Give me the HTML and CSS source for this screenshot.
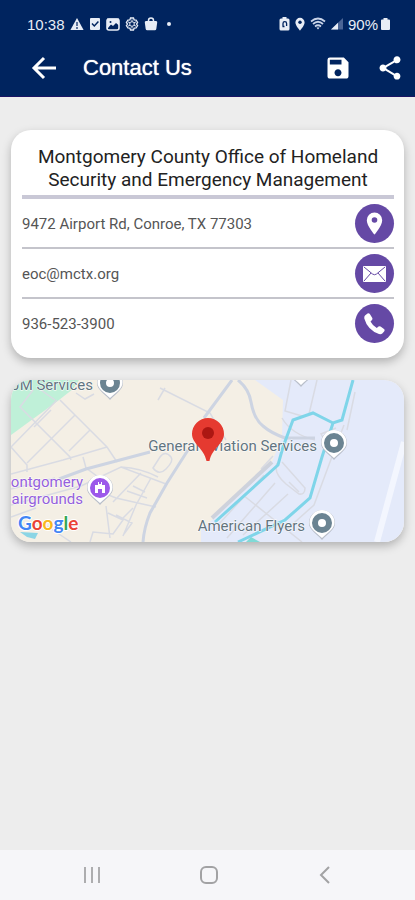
FILE: index.html
```
<!DOCTYPE html>
<html lang="en">
<head>
    <meta charset="UTF-8">
    <meta name="viewport" content="width=device-width, initial-scale=1.0">
    <title>Contact Us</title>
    <link rel="stylesheet" href="styles.css">
</head>
<body>
    <header class="header">
        <div class="status-bar">
            <div class="status-group">
                <span class="status-text">10:38</span>
                <svg width="14" height="14" viewBox="0 0 14 14"><path d="M7 1 13.6 13H.4z" fill="#e8edf6"/><path d="M7 5v4M7 10v2" stroke="#00245f" stroke-width="1.2"/></svg>
                <svg width="12" height="14" viewBox="0 0 12 14"><rect x="1" y="1" width="10" height="12" rx="1" fill="#e8edf6"/><path d="M3 6.5 5.3 9 9.4 4.5" fill="none" stroke="#00245f" stroke-width="1.5"/></svg>
                <svg width="14" height="14" viewBox="0 0 14 14"><rect x="1" y="2" width="12" height="11" rx="2" fill="none" stroke="#e8edf6" stroke-width="1.6"/><path d="M1 1.5h12v7L10 6 7 9 5 7.500 2 11V13L1 12z" fill="#e8edf6"/><path d="M3 10.500 5 8.500 7 10 10 7.500 12 10V11H3z" fill="#00245f"/><circle cx="4.500" cy="5" r="1" fill="#00245f"/></svg>
                <svg width="14" height="14" viewBox="0 0 14 14" fill="none" stroke="#e8edf6"><path d="M5.500 1h3l.6 1.800 2 .2 1.500 2.500L11.500 7l1.100 1.500L11.100 11l-2 .2L8.500 13h-3l-.6-1.800-2-.2L1.400 8.500 2.500 7 1.400 5.500 2.900 3l2-.2z" stroke-width="1.300"/><circle cx="7" cy="7" r="2.300"/><path d="M7 2.500v2.200M7 9.300v2.200M3 4.800l2 1.100M9 8.100l2 1.100M3 9.200l2-1.100M9 5.900l2-1.100"/></svg>
                <svg width="14" height="14" viewBox="0 0 14 14"><path d="M4.500 5V3.500a2.500 2.500 0 0 1 5 0V5" fill="none" stroke="#e8edf6" stroke-width="1.500"/><path d="M2 4h10q1.500 0 1.200 1.500L12.300 12q-.2 1.200-1.500 1.200H3.200Q1.900 13.200 1.700 12L.8 5.500Q.5 4 2 4z" fill="#e8edf6"/></svg>
                <span class="status-dot"></span>
            </div>
            <div class="status-group">
                <svg width="11" height="14" viewBox="0 0 11 14"><path d="M3.500 0h4v1.500H9q1.500 0 1.500 1.500v9q0 1.500-1.500 1.500H2Q.5 13.500.5 12V3Q.5 1.500 2 1.500h1.500z" fill="#e8edf6"/><path d="M4 9.500V6.500a1.800 1.800 0 0 1 3.600 0V9M3.500 9.500h2" fill="none" stroke="#00245f" stroke-width="1.300"/></svg>
                <svg width="10" height="14" viewBox="0 0 10 14"><path d="M5 .8A4.600 4.600 0 0 0 .4 5.400C.4 8.500 5 13.500 5 13.500S9.600 8.500 9.600 5.400A4.600 4.600 0 0 0 5 .8z" fill="#e8edf6"/><circle cx="5" cy="5.300" r="1.700" fill="#00245f"/></svg>
                <svg width="16" height="14" viewBox="0 0 16 14" fill="none" stroke="#c9d4e8" stroke-width="1.700"><path d="M1 4.500Q8-1.500 15 4.500M3 7q5-4.500 10 0M5 9.500q3-2.500 6 0"/><path d="M6.500 10.500h3L8 12.500z" fill="#e8edf6" stroke="none"/></svg>
                <svg width="12" height="14" viewBox="0 0 12 14"><path d="M0 12.500 12 1v11.500z" fill="#4a6596"/><path d="M0 12.500 7 5.800v6.700z" fill="#e8edf6"/></svg>
                <span class="status-battery">
                    <span class="status-text">90%</span>
                    <svg width="9" height="14" viewBox="0 0 9 14"><path d="M2.500 1h4v1.500H8q1 0 1 1V12q0 1-1 1H1q-1 0-1-1V3.500q0-1 1-1h1.500z" fill="#e8edf6"/></svg>
                </span>
            </div>
        </div>
        <div class="app-bar">
            <button class="icon-button" type="button" aria-label="Back">
                <svg width="28" height="28" viewBox="0 0 28 28" fill="none" stroke="#fff" stroke-width="3"><path d="M25 14H4M13 4 3 14l10 10"/></svg>
            </button>
            <h1 class="app-title">Contact Us</h1>
            <button class="icon-button" type="button" aria-label="Save">
                <svg width="28" height="28" viewBox="0 0 24 24" fill="#fff"><path d="M17 3H5a2 2 0 0 0-2 2v14c0 1.100.9 2 2 2h14c1.100 0 2-.9 2-2V7l-4-4zm-5 16c-1.660 0-3-1.340-3-3s1.340-3 3-3 3 1.340 3 3-1.340 3-3 3zm3-10H5V5h10v4z"/></svg>
            </button>
            <button class="icon-button" type="button" aria-label="Share">
                <svg width="28" height="28" viewBox="0 0 24 24" fill="#fff"><path d="M18 16.080c-.76 0-1.440.3-1.960.77L8.910 12.700c.05-.23.09-.46.09-.7s-.04-.47-.09-.7l7.050-4.110c.54.5 1.250.81 2.040.81 1.660 0 3-1.340 3-3s-1.340-3-3-3-3 1.340-3 3c0 .24.04.47.09.7L8.040 9.810C7.500 9.310 6.790 9 6 9c-1.660 0-3 1.340-3 3s1.340 3 3 3c.79 0 1.500-.31 2.040-.81l7.120 4.160c-.05.21-.08.43-.08.65 0 1.610 1.310 2.920 2.920 2.920s2.920-1.310 2.920-2.920-1.310-2.920-2.920-2.920z"/></svg>
            </button>
        </div>
    </header>

    <main class="content">
        <section class="card">
            <h2 class="card-title">Montgomery County Office of Homeland Security and Emergency Management</h2>
            <div class="row">
                <span>9472 Airport Rd, Conroe, TX 77303</span>
                <a class="round-link" href="geo:0,0?q=9472+Airport+Rd,+Conroe,+TX+77303" aria-label="Open in maps">
                    <svg width="39" height="39" viewBox="0 0 39 39"><path d="M19.500 8.500a7.700 7.700 0 0 0-7.700 7.700c0 5.800 7.700 14.300 7.700 14.300s7.700-8.500 7.700-14.300a7.700 7.700 0 0 0-7.700-7.700z" fill="#fff"/><circle cx="19.500" cy="16" r="2.800" fill="#6549a5"/></svg>
                </a>
            </div>
            <div class="row">
                <span>eoc@mctx.org</span>
                <a class="round-link" href="mailto:eoc@mctx.org" aria-label="Send email">
                    <svg width="39" height="39" viewBox="0 0 39 39"><rect x="8" y="12" width="23" height="16" rx="1" fill="#fff"/><path d="m9 13 8.500 7q2 1.500 4 0l8.500-7M9 27l7-8M30 27l-7-8" fill="none" stroke="#6549a5" stroke-width="1"/></svg>
                </a>
            </div>
            <div class="row">
                <span>936-523-3900</span>
                <a class="round-link" href="tel:9365233900" aria-label="Call">
                    <svg width="39" height="39" viewBox="0 0 39 39"><path d="M10 11.500 12.500 9.500Q14 8.800 15 10.200L17.300 14Q17.800 15.200 17 16L15.500 17.500Q17.500 21.500 21.800 24L23.500 22.500Q24.500 21.800 25.500 22.500L29 25Q30.200 26 29.300 27.300L27.300 29.500Q26 30.500 24 30Q12.500 26 9.300 14.500Q9 12.500 10 11.500z" fill="#fff"/></svg>
                </a>
            </div>
        </section>

        <section class="map" aria-label="Map">
            <svg class="map-canvas" viewBox="0 0 393 162" preserveAspectRatio="xMidYMid slice">
                <defs>
                    <g id="place">
                        <path d="M0-14A13 13 0 0 0-13-1C-13 6-6 9 0 16 6 9 13 6 13-1A13 13 0 0 0 0-14z" fill="#b9bfca"/>
                        <path d="M0-14A12.500 12.500 0 0 0-12.500-1.500C-12.500 5-6 8 0 14 6 8 12.500 5 12.500-1.500A12.500 12.500 0 0 0 0-14z" fill="#fff"/>
                    </g>
                </defs>
                <!-- land -->
                <rect width="393" height="162" fill="#f4efe5"/>
                <path d="M0 0H68L62 9 48 20 0 55z" fill="#bff0d8"/>
                <path d="M244 0 272 20 271 57 261 82 200 141 190 150V162H393V0z" fill="#e4eafa"/>
                <path d="M393 62 366 162" stroke="#f3f6fe" stroke-width="6"/>
                <path d="M9 152 27 153 24 159 16 157z" fill="#8bd5e5"/>
                <path d="M235 162 240 157 249 162z" fill="#7fdad6"/>
                <!-- streets -->
                <g fill="none" stroke="#d9dbe3" stroke-width="1.500">
                    <path d="M22 10 9 27 59 77 60 80M46 20 0 67 16 85V92M30 10 44 20M49 20 64 35 96 67 106 82M64 35 16 83M79 50 58 71M40 30 23 47M0 94 52 80 96 67M72 77 75 88 90 99"/>
                    <path d="M65 13 74 19 83 14M149 8 199 33 215 60M154 8 147 20M0 109 44 98M0 125 70 106 110 87 155 104M110 87Q130 88 147 97M90 112 105 118 127 123 145 127M102 122 130 93M116 111 136 118M122 106 134 112M140 98 125 125 112 156M95 126 99 158M97 133 112 140 102 154 82 152 79 162M112 138 122 128M105 135 121 143 113 154M36 146 60 162M0 137 25 128"/>
                    <path d="M142 88 149 77Q154 70 160 77 163 81 155 89 148 96 142 88z"/>
                    <path d="M280 0 274 31 291 36M306 0 298 34M271 38Q280 54 304 60M333 45 319 82 303 125 275 150M325 48 310 54 314 61M266 83Q262 93 275 104L288 114Q294 115 294 108L271 82M278 102 288 112M232 115 291 162M253 95 207 145M264 103 216 158M277 114 232 155M262 76 250 89M344 12 336 50"/>
                </g>
                <path d="M261 82 201 138" stroke="#ced2dc" stroke-width="4"/>
                <g fill="none" stroke="#cdd4e2" stroke-width="3">
                    <path d="M48 99 75 89 139 72"/>
                    <path d="M177 70 156 103 139 133Q133 148 132 162M193 38 221 0"/>
                    <path d="M227 0Q238 9 240 22 243 39 252 46 260 53 274 58H304"/>
                </g>
                <g fill="none" stroke="#7fd5e9" stroke-width="3">
                    <path d="M342 0 331 40 322 43 302 33 282 40 272 67 267 85 204 142"/>
                    <path d="M322 43 311 77 299 118 274 140 227 162"/>
                </g>
                <!-- places -->
                <g class="map-label">
                    <text x="82" y="10" text-anchor="end">JM Services</text>
                    <text x="306" y="71" text-anchor="end">General Aviation Services</text>
                    <text x="294" y="151" text-anchor="end">American Flyers</text>
                </g>
                <g class="map-label map-label-purple">
                    <text x="72" y="107" text-anchor="end">ontgomery</text>
                    <text x="72" y="124" text-anchor="end">airgrounds</text>
                </g>
                <use href="#place" x="99" y="4"/>
                <circle cx="99" cy="3" r="7" fill="none" stroke="#6b8492" stroke-width="6"/>
                <use href="#place" x="290" y="-9"/>
                <use href="#place" x="323" y="64"/>
                <circle cx="323" cy="63" r="7" fill="none" stroke="#6b8492" stroke-width="6"/>
                <use href="#place" x="311" y="144"/>
                <circle cx="311" cy="143" r="7" fill="none" stroke="#6b8492" stroke-width="6"/>
                <use href="#place" x="89" y="109"/>
                <circle cx="89" cy="108" r="10" fill="#9c58ea"/>
                <path d="M84 105H87V102H88V104H90V102H91V105H94V113H91V109H87V113H84z" fill="#fff"/>
                <path d="M197 38a16 16 0 0 0-16 16c0 10 12 14 14.500 27h3c2.500-13 14.500-17 14.500-27a16 16 0 0 0-16-16z" fill="#e53a30"/>
                <circle cx="197" cy="53" r="6" fill="#ac1712"/>
                <text class="map-logo" x="7" y="150"><tspan fill="#4285f4">G</tspan><tspan fill="#ea4335">o</tspan><tspan fill="#f9b820">o</tspan><tspan fill="#4285f4">g</tspan><tspan fill="#34a853">l</tspan><tspan fill="#ea4335">e</tspan></text>
            </svg>
        </section>
    </main>

    <nav class="nav-bar">
        <button class="nav-button" type="button" aria-label="Recent apps">
            <svg width="20" height="20" viewBox="0 0 20 20" stroke="#adadaf" stroke-width="2"><path d="M3 2v16M10 2v16M17 2v16"/></svg>
        </button>
        <button class="nav-button" type="button" aria-label="Home">
            <svg width="20" height="20" viewBox="0 0 20 20" fill="none" stroke="#a2a2a4" stroke-width="2"><rect x="2" y="2" width="16" height="16" rx="5"/></svg>
        </button>
        <button class="nav-button" type="button" aria-label="Back">
            <svg width="20" height="20" viewBox="0 0 20 20" fill="none" stroke="#a2a2a4" stroke-width="2"><path d="M14 2 6 10l8 8"/></svg>
        </button>
    </nav>
</body>
</html>
```

FILE: styles.css
```
* {
    box-sizing: border-box;
}

body {
    margin: 0;
    min-height: 100vh;
    display: flex;
    flex-direction: column;
    background: #ededed;
    font-family: Roboto, sans-serif;
}

svg {
    display: block;
}

button {
    padding: 0;
    border: none;
    background: none;
    cursor: pointer;
}

.header {
    background: #00245f;
    color: white;
    border-bottom: 1px solid #1b1464;
    padding-bottom: 8px;
    font-family: "Liberation Sans", Arial, sans-serif;
}

.status-bar {
    display: flex;
    justify-content: space-between;
    align-items: center;
    height: 48px;
    padding: 0 25px 0 27px;
}

.status-group {
    display: flex;
    align-items: center;
    gap: 5px;
}

.status-text {
    font-size: 15px;
    color: #e8edf6;
}

.status-battery {
    display: flex;
    align-items: center;
    gap: 3px;
}

.status-dot {
    width: 4px;
    height: 4px;
    margin-left: 4px;
    border-radius: 50%;
    background: #e8edf6;
}

.app-bar {
    display: flex;
    align-items: center;
    height: 40px;
    gap: 24px;
    padding: 0 11px 0 31px;
}

.app-title {
    flex: 1;
    margin: 0;
    font-size: 22px;
    font-weight: normal;
    text-shadow: 0 0 1px white;
}

.content {
    flex: 1;
    display: flex;
    flex-direction: column;
    gap: 22px;
    padding: 33px 11px;
}

.card {
    padding: 15px 10px 11px 11px;
    border-radius: 20px;
    background: white;
    box-shadow: 0 4px 10px rgba(0, 0, 0, 0.25);
}

.card-title {
    margin: 0;
    padding-bottom: 4px;
    border-bottom: 4px solid #c9c8d6;
    color: #222;
    font-size: 19px;
    font-weight: normal;
    line-height: 23px;
    text-align: center;
}

.row {
    display: flex;
    justify-content: space-between;
    align-items: center;
    padding: 5px 0 4px;
    border-bottom: 2px solid #c4c4cb;
    color: #555;
    font-size: 15px;
}

.row:last-child {
    border-bottom: none;
}

.round-link {
    border-radius: 50%;
    background: #6549a5;
}

.map {
    height: 162px;
    border-radius: 20px;
    overflow: hidden;
    box-shadow: 0 4px 10px rgba(0, 0, 0, 0.25);
}

.map-canvas {
    width: 100%;
    height: 100%;
}

.map-label {
    font-size: 15px;
    fill: #62747f;
    stroke: white;
    stroke-width: 1px;
    paint-order: stroke;
}

.map-label-purple {
    fill: #9460dc;
}

.map-logo {
    font-family: Lato, sans-serif;
    font-size: 19px;
    font-weight: bold;
    stroke: white;
    stroke-width: 2px;
    paint-order: stroke;
}

.nav-bar {
    display: flex;
    justify-content: space-between;
    align-items: center;
    height: 50px;
    padding: 0 80px 0 82px;
    background: #f6f6f9;
}
```
